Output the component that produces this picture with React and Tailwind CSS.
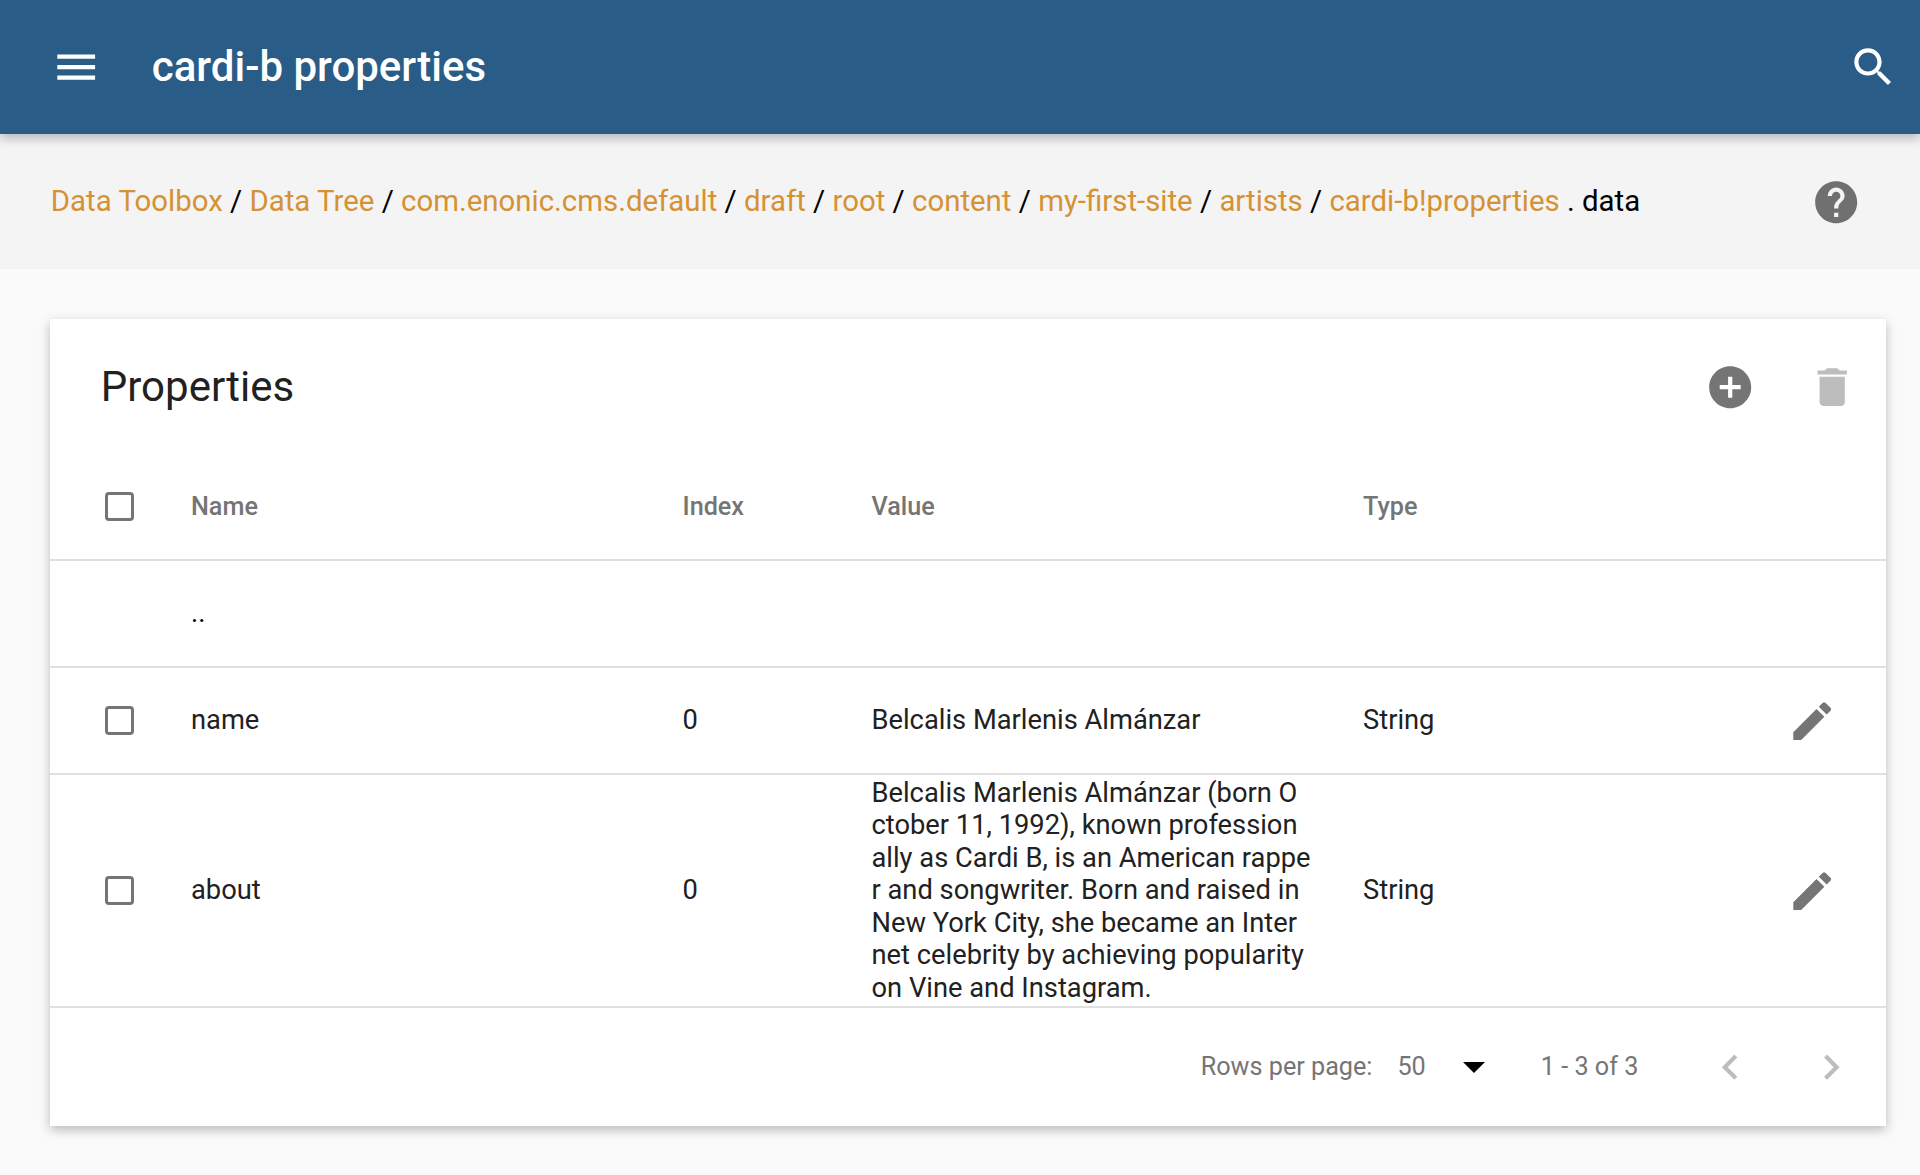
const PATHS = {
  menu: 'M3 18h18v-2H3v2zm0-5h18v-2H3v2zm0-7v2h18V6H3z',
  search:
    'M15.5 14h-.79l-.28-.27C15.41 12.59 16 11.11 16 9.5 16 5.91 13.09 3 9.5 3S3 5.91 3 9.5 5.91 16 9.5 16c1.61 0 3.09-.59 4.23-1.57l.27.28v.79l5 4.99L20.49 19l-4.99-5zm-6 0C7.01 14 5 11.99 5 9.5S7.01 5 9.5 5 14 7.01 14 9.5 11.99 14 9.5 14z',
  help: 'M12 2C6.48 2 2 6.48 2 12s4.48 10 10 10 10-4.48 10-10S17.52 2 12 2zm1 17h-2v-2h2v2zm2.07-7.75l-.9.92C13.45 12.9 13 13.5 13 15h-2v-.5c0-1.1.45-2.1 1.17-2.83l1.24-1.26c.37-.36.59-.86.59-1.41 0-1.1-.9-2-2-2s-2 .9-2 2H8c0-2.21 1.79-4 4-4s4 1.79 4 4c0 .88-.36 1.68-.93 2.25z',
  add: 'M12 2C6.48 2 2 6.48 2 12s4.48 10 10 10 10-4.48 10-10S17.52 2 12 2zm5 11h-4v4h-2v-4H7v-2h4V7h2v4h4v2z',
  trash: 'M6 19c0 1.1.9 2 2 2h8c1.1 0 2-.9 2-2V7H6v12zM19 4h-3.500l-1-1h-5l-1 1H5v2h14V4z',
  edit: 'M3 17.25V21h3.75L17.81 9.94l-3.75-3.75L3 17.25zM20.71 7.04c.39-.39.39-1.02 0-1.41l-2.34-2.34c-.39-.39-1.02-.39-1.41 0l-1.83 1.83 3.75 3.75 1.83-1.83z',
  left: 'M15.41 7.41L14 6l-6 6 6 6 1.41-1.41L10.830 12z',
  right: 'M10 6L8.590 7.410 13.170 12l-4.580 4.590L10 18l6-6z',
};

function Icon({ name, className = '' }) {
  return (
    <svg viewBox="0 0 24 24" className={`mt-[1.2px] h-[50.4px] w-[50.4px] shrink-0 fill-current ${className}`}>
      <path d={PATHS[name]} />
    </svg>
  );
}

const Checkbox = () => (
  <span className="block h-[29px] w-[29px] rounded-[4px] border-[3px] border-[#757575]" />
);

const COLUMNS =
  'grid grid-cols-[141px_491.500px_189px_491.500px_400px_1fr] items-center border-b-2 border-[#e0e0e0]';

const CRUMBS = [
  'Data Toolbox',
  'Data Tree',
  'com.enonic.cms.default',
  'draft',
  'root',
  'content',
  'my-first-site',
  'artists',
  'cardi-b!properties',
];

const ABOUT = [
  'Belcalis Marlenis Almánzar (born O',
  'ctober 11, 1992), known profession',
  'ally as Cardi B, is an American rappe',
  'r and songwriter. Born and raised in',
  'New York City, she became an Inter',
  'net celebrity by achieving popularity',
  'on Vine and Instagram.',
];

const ROWS = [
  { name: 'name', lines: ['Belcalis Marlenis Almánzar'], height: 'h-[107px]' },
  { name: 'about', lines: ABOUT, height: 'h-[233px]' },
];

export default function App() {
  return (
    <div className="flex h-[1175px] w-[1920px] flex-col overflow-hidden bg-[#fafafa] font-['Roboto',sans-serif] text-black">
      <header className="z-10 flex h-[134px] shrink-0 items-center bg-[#295c86] pr-[21.7px] pl-[51px] text-white shadow-[0_4.2px_10.5px_0_rgba(0,0,0,.26)]">
        <Icon name="menu" />
        <h1 className="mb-[2px] ml-[50.4px] text-[42px] leading-[67px] font-medium">cardi-b properties</h1>
        <Icon name="search" className="ml-auto" />
      </header>

      <div className="flex h-[134.500px] shrink-0 items-center bg-[#f4f4f4] pr-[59px] pl-[50.8px]">
        <nav className="text-[29.4px] leading-[42px] whitespace-pre">
          {CRUMBS.map((crumb, i) => (
            <span key={crumb}>
              {i > 0 && ' / '}
              <a className="text-[#d49234]">{crumb}</a>
            </span>
          ))}
          {' . data'}
        </nav>
        <Icon name="help" className="ml-auto text-[#707070]" />
      </div>

      <main className="mt-[50.5px] mr-[34px] ml-[50px] flex h-[807px] flex-col bg-white text-[27.3px] text-[#212121] shadow-[0_4.2px_10.5px_0_rgba(0,0,0,.26)]">
        <div className="flex h-[135px] items-center pr-[29px] pl-[50.8px]">
          <h2 className="text-[42px] leading-[67px]">Properties</h2>
          <Icon name="add" className="ml-auto text-[#757575]" />
          <Icon name="trash" className="ml-[51px] text-[#bdbdbd]" />
        </div>

        <div className={`${COLUMNS} h-[107px] text-[25.2px] font-medium text-[#757575]`}>
          <div className="pl-[55px]">
            <Checkbox />
          </div>
          <div>Name</div>
          <div>Index</div>
          <div>Value</div>
          <div>Type</div>
        </div>

        <div className={`${COLUMNS} h-[107px]`}>
          <div />
          <div className="text-black">..</div>
        </div>

        {ROWS.map((row) => (
          <div key={row.name} className={`${COLUMNS} ${row.height}`}>
            <div className="pl-[55px]">
              <Checkbox />
            </div>
            <div>{row.name}</div>
            <div>0</div>
            <div className="leading-[32.55px] whitespace-nowrap">
              {row.lines.map((line) => (
                <div key={line}>{line}</div>
              ))}
            </div>
            <div>String</div>
            <div className="flex justify-end pr-[48.7px]">
              <Icon name="edit" className="text-[#757575]" />
            </div>
          </div>
        ))}

        <div className="flex h-[118px] items-center justify-end pr-[29.5px] text-[25.2px] text-[#757575]">
          <span>Rows per page:</span>
          <span className="ml-[25px]">50</span>
          <svg viewBox="0 0 22 11" className="ml-[37px] h-[11px] w-[22px] fill-black">
            <path d="M0 0h22L11 11z" />
          </svg>
          <span className="ml-[56px]">1 - 3 of 3</span>
          <Icon name="left" className="ml-[67px] text-[#bdbdbd]" />
          <Icon name="right" className="ml-[50.4px] text-[#bdbdbd]" />
        </div>
      </main>
    </div>
  );
}
